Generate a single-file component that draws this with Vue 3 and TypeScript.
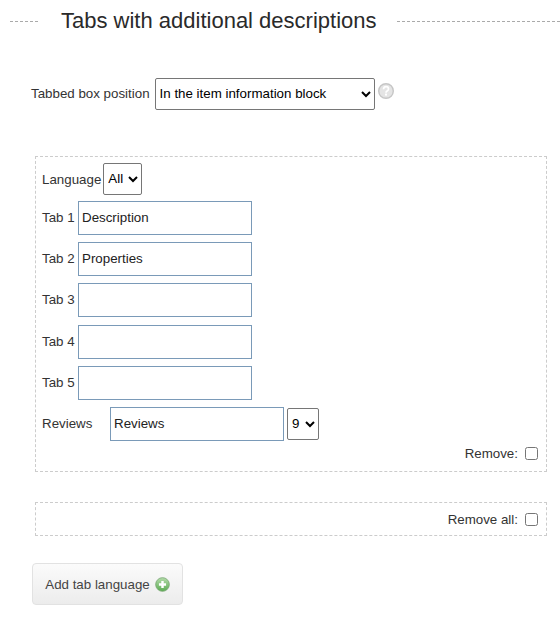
<script setup lang="ts">
const tabs = [
  { label: 'Tab 1', value: 'Description' },
  { label: 'Tab 2', value: 'Properties' },
  { label: 'Tab 3', value: '' },
  { label: 'Tab 4', value: '' },
  { label: 'Tab 5', value: '' },
]
</script>

<template>
  <div class="page">
    <div class="title-row">
      <span class="dash dash-left"></span>
      <h2 class="title">Tabs with additional descriptions</h2>
      <span class="dash dash-right"></span>
    </div>

    <div class="position-row">
      <label class="position-label">Tabbed box position</label>
      <select class="select position-select">
        <option>In the item information block</option>
      </select>
      <svg class="help" viewBox="0 0 16 16" width="16" height="16" xmlns="http://www.w3.org/2000/svg">
        <circle cx="8" cy="8" r="7.3" fill="#e4e4e4" stroke="#c6c6c6" stroke-width="1.4" />
        <path d="M5.5 6.2 Q5.7 3.6 8 3.6 Q10.5 3.6 10.5 5.9 Q10.5 7.2 9.1 8 Q8 8.6 8 9.8" fill="none" stroke="#fff" stroke-width="1.7" />
        <rect x="7" y="10.6" width="2" height="2" fill="#fff" />
      </svg>
    </div>

    <div class="box lang-box">
      <div class="row lang-row">
        <span>Language</span>
        <select class="select lang-select"><option>All</option></select>
      </div>
      <div v-for="tab in tabs" :key="tab.label" class="row tab-row">
        <span class="tab-label">{{ tab.label }}</span>
        <input class="input" type="text" :value="tab.value" />
      </div>
      <div class="row reviews-row">
        <span class="reviews-label">Reviews</span>
        <input class="input" type="text" value="Reviews" />
        <select class="select order-select"><option>9</option></select>
      </div>
      <div class="remove-row">
        <span>Remove:</span>
        <input class="check" type="checkbox" />
      </div>
    </div>

    <div class="box remove-all">
      <span>Remove all:</span>
      <input class="check" type="checkbox" />
    </div>

    <button class="add-btn" type="button">
      Add tab language
      <svg viewBox="0 0 16 16" width="15" height="15" xmlns="http://www.w3.org/2000/svg">
        <defs>
          <linearGradient id="plus-fill" x1="0" y1="0" x2="0" y2="1">
            <stop offset="0" stop-color="#b4dcaa" />
            <stop offset="1" stop-color="#5cab52" />
          </linearGradient>
        </defs>
        <circle cx="8" cy="8" r="7.3" fill="url(#plus-fill)" stroke="#7aa874" stroke-width="0.9" />
        <path d="M8 4.2 V11.8 M4.2 8 H11.8" stroke="#fff" stroke-width="2.6" />
      </svg>
    </button>
  </div>
</template>

<style>
html, body {
  margin: 0;
  background: #fff;
}
</style>

<style scoped>
.page {
  width: 560px;
  height: 620px;
  overflow: hidden;
  font-family: "Liberation Sans", Arial, sans-serif;
  font-size: 13.33px;
  color: #333;
}

.title-row {
  display: flex;
  align-items: center;
  height: 42px;
}

.dash {
  border-top: 1px dashed #aaa;
  margin-top: 1px;
}

.dash-left {
  width: 28px;
  margin-left: 10px;
}

.dash-right {
  flex: 1;
}

.title {
  margin: 0 20px 0 23px;
  font-size: 22px;
  font-weight: normal;
  color: #2a2a2a;
}

.position-row {
  display: flex;
  align-items: flex-start;
  margin: 36px 0 0 31px;
}

.position-label {
  margin: 8px 5px 0 0;
}

.select {
  font-family: "Liberation Sans", Arial, sans-serif;
  font-size: 13.33px;
  color: #000;
  background: #fff;
  border: 1px solid #767676;
  border-radius: 2px;
  box-sizing: border-box;
}

.position-select {
  width: 220px;
  height: 32px;
  padding-bottom: 2px;
}

.help {
  margin: 5px 0 0 3px;
}

.box {
  margin-left: 35px;
  width: 512px;
  box-sizing: border-box;
  border: 1px dashed #ccc;
}

.lang-box {
  margin-top: 46px;
  height: 316px;
  padding: 6px 0 0 6px;
}

.row {
  display: flex;
  align-items: center;
}

.lang-row {
  height: 32px;
  gap: 2px;
  margin-bottom: 6px;
}

.lang-select {
  width: 39px;
  height: 32px;
  padding-bottom: 2px;
}

.tab-row {
  margin-bottom: 7.2px;
}

.tab-label {
  width: 36px;
  padding-bottom: 1px;
}

.input {
  width: 174px;
  height: 34px;
  box-sizing: border-box;
  padding: 0 3px 2px;
  border: 1px solid #7a9ab8;
  border-radius: 0;
  font-family: "Liberation Sans", Arial, sans-serif;
  font-size: 13.33px;
  color: #222;
  outline: none;
}

.reviews-row .input {
  padding-bottom: 0;
}

.reviews-label {
  width: 68px;
}

.order-select {
  width: 32px;
  height: 32px;
  margin-left: 3px;
}

.remove-row,
.remove-all {
  display: flex;
  align-items: center;
  justify-content: flex-end;
}

.remove-row {
  margin-top: 5px;
}

.check {
  width: 13px;
  height: 13px;
  margin: 0 8px 0 7px;
}

.remove-all {
  margin-top: 30px;
  height: 34px;
}

.add-btn {
  display: flex;
  align-items: center;
  justify-content: center;
  gap: 5px;
  width: 151px;
  height: 42px;
  margin: 27px 0 0 32px;
  padding: 0;
  border: 1px solid #e2e2e2;
  border-radius: 4px;
  background: linear-gradient(#fbfbfb, #ececec);
  font-family: "Liberation Sans", Arial, sans-serif;
  font-size: 13.33px;
  color: #444;
}
</style>
